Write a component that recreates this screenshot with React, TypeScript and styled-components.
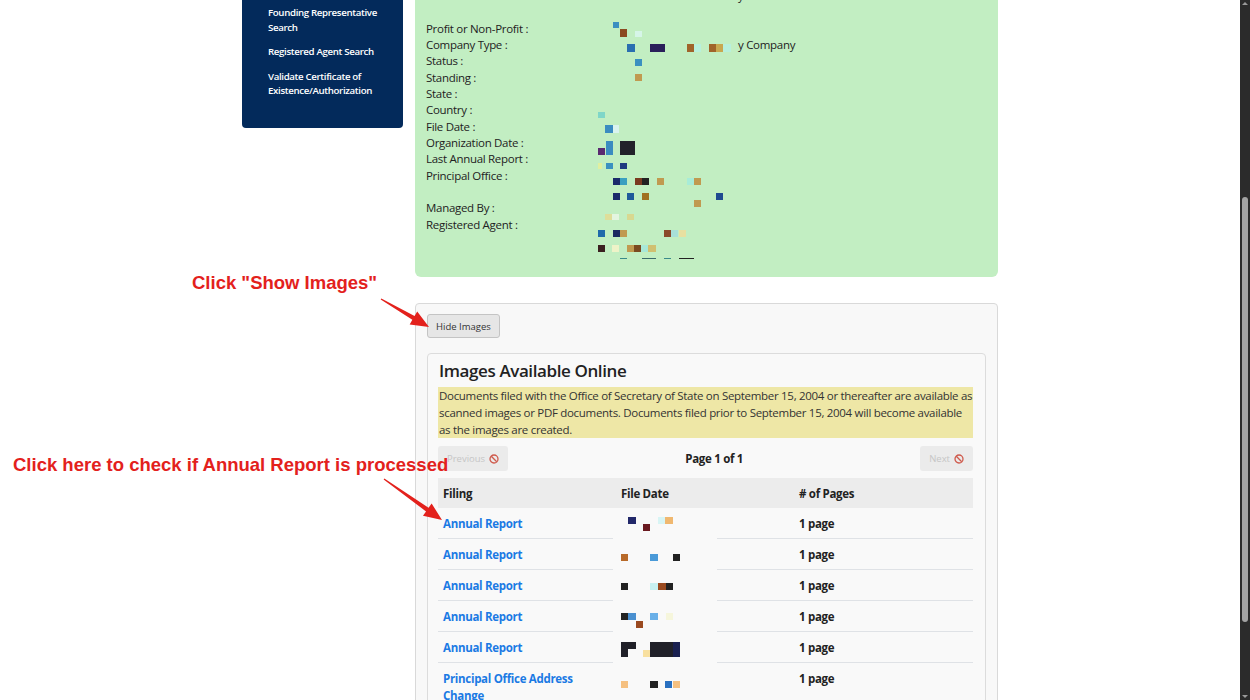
import React from 'react';
import styled, { createGlobalStyle } from 'styled-components';

type Block = [number, number, number, number, string];

const GlobalStyle = createGlobalStyle`
  html, body {
    margin: 0;
    padding: 0;
    height: 700px;
    overflow: hidden;
    background: #ffffff;
  }
  body {
    font-family: 'Open Sans', 'Noto Sans', sans-serif;
    color: #212529;
    letter-spacing: -0.3px;
  }
`;

const Viewport = styled.div`
  display: flex;
  width: 1250px;
  height: 700px;
`;

const Page = styled.div`
  position: relative;
  flex: 1;
  overflow: hidden;
`;

const Layout = styled.div`
  width: 756px;
  margin: -22px auto 0;
  display: flex;
  gap: 12px;
  align-items: flex-start;
`;

const Sidebar = styled.nav`
  width: 161px;
  box-sizing: border-box;
  background: #032a5b;
  border-radius: 0 0 4px 4px;
  padding: 28px 8px 29px 26px;
  display: flex;
  flex-direction: column;
  gap: 10px;
`;

const NavLink = styled.a`
  color: #ffffff;
  font-size: 9.7px;
  font-weight: 600;
  line-height: 14.5px;
  letter-spacing: -0.35px;
  text-decoration: none;
`;

const Main = styled.main`
  width: 583px;
  display: flex;
  flex-direction: column;
`;

const DetailsPanel = styled.section`
  background: #c2eec2;
  border-radius: 0 0 6px 6px;
  padding: 10px 11px 11px;
`;

const DetailRow = styled.div`
  display: grid;
  grid-template-columns: 171px 1fr;
  height: 16.33px;
  font-size: 11.5px;
  line-height: 16.33px;
  color: #222;
`;

const Value = styled.div`
  display: flex;
  align-items: flex-start;
`;

const Mosaic = styled.svg`
  display: block;
  overflow: visible;
  flex: none;
`;

const ImagesCard = styled.section`
  margin-top: 26px;
  border: 1px solid #d9d9d9;
  border-radius: 4px;
  background: #f8f8f8;
  padding: 9px 11px 20px;
`;

const ToggleButton = styled.button`
  height: 24px;
  padding: 0 8px;
  border: 1px solid #c4c4c4;
  border-radius: 3px;
  background: #e6e6e6;
  color: #333;
  font-family: inherit;
  font-size: 9.5px;
  letter-spacing: 0;
`;

const InnerCard = styled.div`
  margin-top: 15px;
  border: 1px solid #dcdcdc;
  border-radius: 4px;
  background: #f9f9f9;
  padding: 6px 12px 0 10px;
`;

const Title = styled.h2`
  margin: 0 0 5px 1px;
  font-size: 17px;
  font-weight: 600;
  line-height: 22px;
  letter-spacing: -0.4px;
  color: #222;
`;

const Notice = styled.p`
  margin: 0;
  background: #eee7a6;
  font-size: 11.5px;
  line-height: 17px;
  color: #333;
  padding-left: 1px;
`;

const Pager = styled.div`
  margin-top: 8px;
  height: 25px;
  display: flex;
  align-items: center;
  justify-content: space-between;
`;

const PagerButton = styled.button`
  height: 25px;
  padding: 0 9px;
  border: none;
  border-radius: 3px;
  background: #ebebeb;
  color: #c6c6c6;
  font-family: inherit;
  font-size: 9.5px;
  letter-spacing: 0;
  display: inline-flex;
  align-items: center;
  gap: 4px;
`;

const PageLabel = styled.span`
  font-size: 11.5px;
  font-weight: 700;
  color: #222;
`;

const Table = styled.div`
  margin-top: 7px;
  display: flex;
  flex-direction: column;
`;

const HeaderRow = styled.div`
  display: grid;
  grid-template-columns: 175px 178px 1fr;
  height: 30px;
  align-items: center;
  background: #ececec;
  font-size: 11.5px;
  font-weight: 700;
  color: #222;
`;

const Row = styled.div`
  display: grid;
  grid-template-columns: 175px 178px 1fr;
  font-size: 11.5px;
  font-weight: 700;
  line-height: 17px;
`;

const Cell = styled.div<{ $pad: number }>`
  padding: 7px 8px 6px ${({ $pad }) => $pad}px;
  border-bottom: 1px solid #dfe2e6;
  color: #222;
`;

// the redacted date hides the left part of its rule
const DateCell = styled.div`
  padding-bottom: 1px;
  background-image: linear-gradient(#dfe2e6, #dfe2e6);
  background-repeat: no-repeat;
  background-position: right bottom;
  background-size: calc(100% - 104px) 1px;
`;

const HeadCell = styled.div<{ $pad: number }>`
  padding-left: ${({ $pad }) => $pad}px;
`;

const FilingLink = styled.a`
  color: #1b7ae4;
  text-decoration: none;
`;

const Callout = styled.div<{ $top: number; $left: number }>`
  position: absolute;
  top: ${({ $top }) => $top}px;
  left: ${({ $left }) => $left}px;
  font-family: 'Liberation Sans', Arial, sans-serif;
  font-weight: 700;
  font-size: 18.5px;
  line-height: 20px;
  letter-spacing: 0;
  color: #e3211c;
  white-space: nowrap;
`;

const Overlay = styled.svg`
  position: absolute;
  inset: 0;
  pointer-events: none;
`;

const ScrollTrack = styled.div`
  width: 10px;
  background: #2b2b2b;
  display: flex;
  flex-direction: column;
  align-items: center;
`;

const ScrollArrow = styled.div<{ $down?: boolean }>`
  width: 0;
  height: 0;
  margin: ${({ $down }) => ($down ? 'auto 0 2px' : '2px 0 0')};
  border-left: 3px solid transparent;
  border-right: 3px solid transparent;
  ${({ $down }) => ($down ? 'border-top' : 'border-bottom')}: 3px solid #9a9a9a;
`;

const ScrollThumb = styled.div`
  width: 6px;
  height: 425px;
  margin-top: 192px;
  border-radius: 3px;
  background: #a3a3a3;
`;

const Pixels: React.FC<{ blocks: Block[]; width: number; height: number }> = ({
  blocks,
  width,
  height,
}) => (
  <Mosaic width={width} height={height}>
    {blocks.map(([x, y, w, h, c], i) => (
      <rect key={i} x={x} y={y} width={w} height={h} fill={c} />
    ))}
  </Mosaic>
);

const BlockedIcon = () => (
  <svg width="10" height="10" viewBox="0 0 10 10">
    <circle cx="5" cy="5" r="4" fill="none" stroke="#cf5a4c" strokeWidth="1.3" />
    <line x1="2.3" y1="2.3" x2="7.7" y2="7.7" stroke="#cf5a4c" strokeWidth="1.3" />
  </svg>
);

// tapered arrow: thin tail growing toward a triangular head
const arrowPoints = (tx: number, ty: number, px: number, py: number) => {
  const len = Math.hypot(px - tx, py - ty);
  const dx = (px - tx) / len;
  const dy = (py - ty) / len;
  const nx = -dy;
  const ny = dx;
  const head = 18;
  const bx = px - dx * head;
  const by = py - dy * head;
  const pts = [
    [tx + nx * 0.6, ty + ny * 0.6],
    [bx + nx * 2.2, by + ny * 2.2],
    [bx + nx * 7.5, by + ny * 7.5],
    [px, py],
    [bx - nx * 7.5, by - ny * 7.5],
    [bx - nx * 2.2, by - ny * 2.2],
    [tx - nx * 0.6, ty - ny * 0.6],
  ];
  return pts.map((p) => p.join(',')).join(' ');
};

const details: { label: string; blocks: Block[]; text?: string }[] = [
  { label: 'Name :', blocks: [[-20, 10, 120, 2, '#b9d6b9']], text: 'y in Colorado' },
  { label: '', blocks: [] },
  {
    label: 'Profit or Non-Profit :',
    blocks: [
      [16, 1, 6, 6, '#3a8fc0'],
      [23, 8, 7, 8, '#8b4a20'],
      [38, 10, 7, 6, '#d6f5e8'],
    ],
  },
  {
    label: 'Company Type :',
    blocks: [
      [30, 7, 8, 8, '#2a6fb0'],
      [53, 7, 15, 8, '#2a1f5a'],
      [90, 7, 7, 8, '#a0642a'],
      [97, 7, 7, 8, '#b8f0dc'],
      [112, 7, 7, 8, '#a0642a'],
      [119, 7, 7, 8, '#c8a850'],
      [126, 7, 8, 8, '#b8f0dc'],
    ],
    text: 'y Company',
  },
  { label: 'Status :', blocks: [[38, 6, 7, 7, '#3a90c0']] },
  { label: 'Standing :', blocks: [[38, 4, 7, 7, '#c09a50']] },
  { label: 'State :', blocks: [] },
  { label: 'Country :', blocks: [[1, 10, 7, 6, '#7fd6c8']] },
  {
    label: 'File Date :',
    blocks: [
      [8, 6, 8, 8, '#3a8cc0'],
      [16, 6, 6, 8, '#d9f3ee'],
    ],
  },
  {
    label: 'Organization Date :',
    blocks: [
      [1, 13, 7, 7, '#5a2a70'],
      [9, 6, 7, 14, '#3a8cc0'],
      [23, 6, 15, 14, '#22222a'],
    ],
  },
  {
    label: 'Last Annual Report :',
    blocks: [
      [1, 12, 4, 6, '#e0f0a0'],
      [9, 12, 7, 6, '#3a90c0'],
      [23, 12, 7, 6, '#1f3a80'],
    ],
  },
  {
    label: 'Principal Office :',
    blocks: [
      [16, 10, 7, 7, '#1a2a6a'],
      [23, 10, 7, 7, '#3aa0c0'],
      [38, 10, 7, 7, '#7a3a20'],
      [45, 10, 7, 7, '#222222'],
      [60, 10, 7, 7, '#c09a50'],
      [90, 10, 7, 7, '#a8ecd8'],
      [97, 10, 7, 7, '#c09a50'],
      [16, 25, 7, 7, '#1a2a6a'],
      [30, 25, 7, 7, '#1f5a9a'],
      [45, 25, 7, 7, '#a07020'],
      [119, 25, 7, 7, '#1f4a90'],
      [97, 32, 7, 7, '#c09a50'],
    ],
  },
  { label: '', blocks: [] },
  {
    label: 'Managed By :',
    blocks: [
      [8, 14, 7, 6, '#dede9a'],
      [15, 14, 7, 6, '#e3f5e0'],
      [30, 14, 7, 6, '#d8d890'],
    ],
  },
  {
    label: 'Registered Agent :',
    blocks: [
      [1, 13, 7, 7, '#1f6aaa'],
      [16, 13, 7, 7, '#1a2a60'],
      [23, 13, 7, 7, '#c09a50'],
      [67, 13, 7, 7, '#8a4a2a'],
      [74, 13, 7, 7, '#a8e0d8'],
      [82, 13, 7, 7, '#e8e0a0'],
      [1, 28, 7, 7, '#3a2020'],
      [15, 28, 7, 7, '#eef3c8'],
      [30, 28, 7, 7, '#c09a50'],
      [37, 28, 7, 7, '#7a4a20'],
      [44, 28, 7, 7, '#a8e8d8'],
      [51, 28, 8, 7, '#d0c070'],
      [23, 41, 7, 1, '#3a8a8a'],
      [45, 41, 14, 1, '#3a6a6a'],
      [67, 41, 7, 1, '#3a8a8a'],
      [82, 41, 15, 1, '#222222'],
    ],
  },
  { label: '', blocks: [] },
  { label: '', blocks: [] },
];

const filings: { name: string; blocks: Block[] }[] = [
  {
    name: 'Annual Report',
    blocks: [
      [15, 9, 8, 7, '#22286a'],
      [30, 16, 7, 7, '#6a1a20'],
      [45, 9, 7, 7, '#d8f5f5'],
      [52, 9, 8, 7, '#f0b870'],
    ],
  },
  {
    name: 'Annual Report',
    blocks: [
      [8, 15, 7, 7, '#b86a2a'],
      [37, 15, 8, 7, '#4a9ad8'],
      [60, 15, 7, 7, '#222222'],
    ],
  },
  {
    name: 'Annual Report',
    blocks: [
      [8, 13, 7, 7, '#222222'],
      [37, 13, 8, 7, '#c8f0f0'],
      [45, 13, 8, 7, '#9a4a20'],
      [53, 13, 7, 7, '#222222'],
    ],
  },
  {
    name: 'Annual Report',
    blocks: [
      [8, 12, 7, 7, '#222222'],
      [15, 12, 8, 7, '#4a90d0'],
      [23, 20, 7, 7, '#9a4a20'],
      [37, 12, 8, 7, '#6ab0e8'],
      [53, 12, 7, 7, '#f6f6dc'],
    ],
  },
  {
    name: 'Annual Report',
    blocks: [
      [8, 10, 15, 7, '#202028'],
      [8, 17, 7, 8, '#202028'],
      [30, 18, 7, 7, '#f8e0a0'],
      [37, 10, 23, 15, '#202028'],
      [60, 10, 7, 15, '#1a2050'],
    ],
  },
  {
    name: 'Principal Office Address Change',
    blocks: [
      [8, 18, 7, 7, '#f5c080'],
      [37, 18, 8, 7, '#222222'],
      [52, 18, 7, 7, '#2a70c0'],
      [60, 18, 7, 7, '#f5c080'],
    ],
  },
];

const navItems = [
  'Founding Representative Search',
  'Registered Agent Search',
  'Validate Certificate of Existence/Authorization',
];

export default function App() {
  return (
    <Viewport>
      <GlobalStyle />
      <Page>
        <Layout>
          <Sidebar>
            {navItems.map((item) => (
              <NavLink key={item} href="#">
                {item}
              </NavLink>
            ))}
          </Sidebar>
          <Main>
            <DetailsPanel>
              {details.map((d, i) => (
                <DetailRow key={i}>
                  <span>{d.label}</span>
                  <Value>
                    <Pixels blocks={d.blocks} width={d.text ? 141 : 160} height={16} />
                    {d.text && <span>{d.text}</span>}
                  </Value>
                </DetailRow>
              ))}
            </DetailsPanel>

            <ImagesCard>
              <ToggleButton>Hide Images</ToggleButton>
              <InnerCard>
                <Title>Images Available Online</Title>
                <Notice>
                  Documents filed with the Office of Secretary of State on September 15, 2004 or
                  thereafter are available as scanned images or PDF documents. Documents filed
                  prior to September 15, 2004 will become available as the images are created.
                </Notice>
                <Pager>
                  <PagerButton disabled>
                    Previous <BlockedIcon />
                  </PagerButton>
                  <PageLabel>Page 1 of 1</PageLabel>
                  <PagerButton disabled>
                    Next <BlockedIcon />
                  </PagerButton>
                </Pager>
                <Table>
                  <HeaderRow>
                    <HeadCell $pad={5}>Filing</HeadCell>
                    <HeadCell $pad={8}>File Date</HeadCell>
                    <HeadCell $pad={8}># of Pages</HeadCell>
                  </HeaderRow>
                  {filings.map((f, i) => (
                    <Row key={i}>
                      <Cell $pad={5}>
                        <FilingLink href="#">{f.name}</FilingLink>
                      </Cell>
                      <DateCell>
                        <Pixels blocks={f.blocks} width={100} height={30} />
                      </DateCell>
                      <Cell $pad={8}>1 page</Cell>
                    </Row>
                  ))}
                </Table>
              </InnerCard>
            </ImagesCard>
          </Main>
        </Layout>

        <Callout $top={273} $left={192}>
          Click "Show Images"
        </Callout>
        <Callout $top={455} $left={13}>
          Click here to check if Annual Report is processed
        </Callout>
        <Overlay width="1240" height="700">
          <polygon points={arrowPoints(381, 299, 429, 327)} fill="#e3211c" />
          <polygon points={arrowPoints(384, 479, 442, 520)} fill="#e3211c" />
        </Overlay>
      </Page>
      <ScrollTrack>
        <ScrollArrow />
        <ScrollThumb />
        <ScrollArrow $down />
      </ScrollTrack>
    </Viewport>
  );
}
